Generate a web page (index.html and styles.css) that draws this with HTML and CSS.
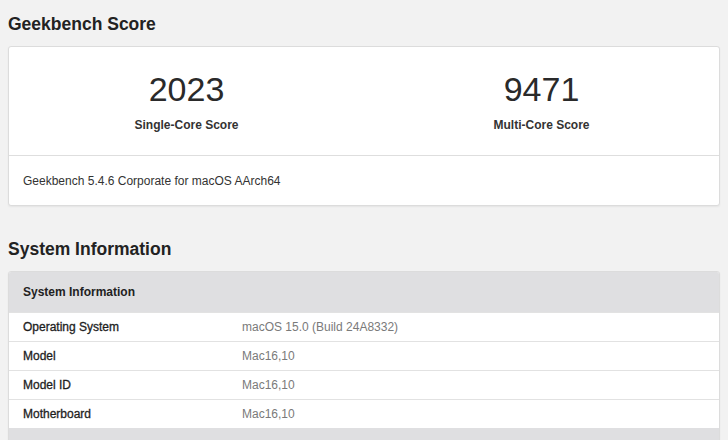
FILE: index.html
```html
<!DOCTYPE html>
<html lang="en">
<head>
<meta charset="utf-8">
<title>Geekbench Score</title>
<link rel="stylesheet" href="styles.css">
</head>
<body>
<main class="page">
  <h2 class="section-title first">Geekbench Score</h2>
  <section class="card">
    <div class="scores">
      <div class="score">
        <div class="score-value">2023</div>
        <div class="score-label">Single-Core Score</div>
      </div>
      <div class="score">
        <div class="score-value">9471</div>
        <div class="score-label">Multi-Core Score</div>
      </div>
    </div>
    <div class="card-footer">Geekbench 5.4.6 Corporate for macOS AArch64</div>
  </section>

  <h2 class="section-title">System Information</h2>
  <section class="card info">
    <div class="info-head">System Information</div>
    <div class="info-row"><div class="info-name">Operating System</div><div class="info-value">macOS 15.0 (Build 24A8332)</div></div>
    <div class="info-row"><div class="info-name">Model</div><div class="info-value">Mac16,10</div></div>
    <div class="info-row"><div class="info-name">Model ID</div><div class="info-value">Mac16,10</div></div>
    <div class="info-row"><div class="info-name">Motherboard</div><div class="info-value">Mac16,10</div></div>
    <div class="info-head empty"></div>
  </section>
</main>
</body>
</html>
```

FILE: styles.css
```css
html, body {
  margin: 0;
  padding: 0;
  background: #f2f2f2;
}
body {
  font-family: "Liberation Sans", Arial, Helvetica, sans-serif;
  color: #222;
}
.page {
  padding: 0 8px;
}
.section-title {
  margin: 32px 0 11px;
  font-size: 17.5px;
  line-height: 22px;
  font-weight: bold;
  color: #222;
}
.section-title.first {
  margin-top: 13px;
}
.card {
  background: #fff;
  border: 1px solid #dcdcdc;
  border-radius: 3px;
  box-shadow: 0 1px 2px rgba(0, 0, 0, 0.06);
  overflow: hidden;
}
.scores {
  display: grid;
  grid-template-columns: 1fr 1fr;
  padding: 22px 0;
  border-bottom: 1px solid #dedede;
}
.score {
  display: flex;
  flex-direction: column;
  align-items: center;
  gap: 8px;
}
.score-value {
  font-size: 34px;
  line-height: 40px;
  color: #2a2a2a;
}
.score-label {
  font-size: 12px;
  line-height: 16px;
  font-weight: bold;
  color: #333;
}
.card-footer {
  padding: 17px 14px 16px;
  font-size: 12px;
  line-height: 16px;
  color: #333;
}
.info-head {
  background: #dfdfe1;
  padding: 12px 14px;
  font-size: 12px;
  line-height: 16px;
  font-weight: bold;
  color: #222;
}
.info-head.empty {
  height: 16px;
}
.info-row {
  display: grid;
  grid-template-columns: 219px 1fr;
  padding: 6px 14px;
  border-top: 1px solid #e2e2e2;
  font-size: 12px;
  line-height: 16px;
}
.info-row:first-of-type {
  border-top: none;
}
.info-name {
  color: #1e1e1e;
  -webkit-text-stroke: 0.3px #1e1e1e;
}
.info-value {
  color: #7a7a7a;
}
```
